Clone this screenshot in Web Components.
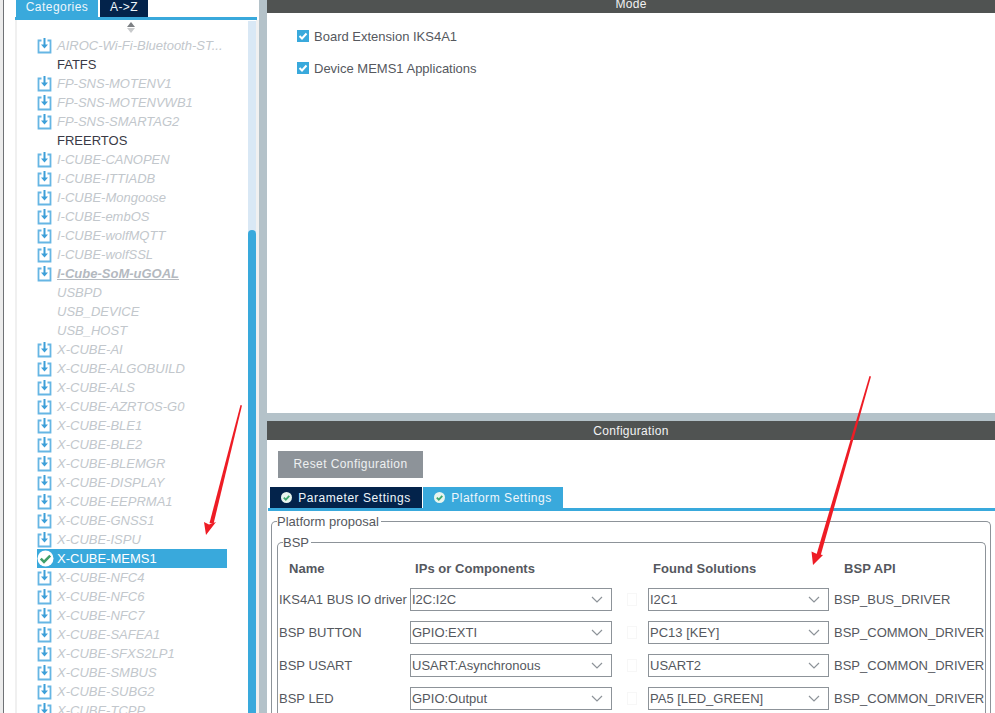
<!DOCTYPE html>
<html>
<head>
<meta charset="utf-8">
<style>
    html, body { margin: 0; height: 713px; overflow: hidden; background: #fff; }
    body { font-family: "Liberation Sans", Arial, sans-serif; font-size: 13px; color: #55585e; }
</style>
</head>
<body>
<cube-app>
    <cube-sidebar slot="left">
        <cube-item kind="pack">AIROC-Wi-Fi-Bluetooth-ST...</cube-item>
        <cube-item kind="plain" dark>FATFS</cube-item>
        <cube-item kind="pack">FP-SNS-MOTENV1</cube-item>
        <cube-item kind="pack">FP-SNS-MOTENVWB1</cube-item>
        <cube-item kind="pack">FP-SNS-SMARTAG2</cube-item>
        <cube-item kind="plain" dark>FREERTOS</cube-item>
        <cube-item kind="pack">I-CUBE-CANOPEN</cube-item>
        <cube-item kind="pack">I-CUBE-ITTIADB</cube-item>
        <cube-item kind="pack">I-CUBE-Mongoose</cube-item>
        <cube-item kind="pack">I-CUBE-embOS</cube-item>
        <cube-item kind="pack">I-CUBE-wolfMQTT</cube-item>
        <cube-item kind="pack">I-CUBE-wolfSSL</cube-item>
        <cube-item kind="pack" strong>I-Cube-SoM-uGOAL</cube-item>
        <cube-item kind="plain">USBPD</cube-item>
        <cube-item kind="plain">USB_DEVICE</cube-item>
        <cube-item kind="plain">USB_HOST</cube-item>
        <cube-item kind="pack">X-CUBE-AI</cube-item>
        <cube-item kind="pack">X-CUBE-ALGOBUILD</cube-item>
        <cube-item kind="pack">X-CUBE-ALS</cube-item>
        <cube-item kind="pack">X-CUBE-AZRTOS-G0</cube-item>
        <cube-item kind="pack">X-CUBE-BLE1</cube-item>
        <cube-item kind="pack">X-CUBE-BLE2</cube-item>
        <cube-item kind="pack">X-CUBE-BLEMGR</cube-item>
        <cube-item kind="pack">X-CUBE-DISPLAY</cube-item>
        <cube-item kind="pack">X-CUBE-EEPRMA1</cube-item>
        <cube-item kind="pack">X-CUBE-GNSS1</cube-item>
        <cube-item kind="pack">X-CUBE-ISPU</cube-item>
        <cube-item kind="done" selected>X-CUBE-MEMS1</cube-item>
        <cube-item kind="pack">X-CUBE-NFC4</cube-item>
        <cube-item kind="pack">X-CUBE-NFC6</cube-item>
        <cube-item kind="pack">X-CUBE-NFC7</cube-item>
        <cube-item kind="pack">X-CUBE-SAFEA1</cube-item>
        <cube-item kind="pack">X-CUBE-SFXS2LP1</cube-item>
        <cube-item kind="pack">X-CUBE-SMBUS</cube-item>
        <cube-item kind="pack">X-CUBE-SUBG2</cube-item>
        <cube-item kind="pack">X-CUBE-TCPP</cube-item>
    </cube-sidebar>

    <cube-mode slot="top">
        <cube-check>Board Extension IKS4A1</cube-check>
        <cube-check>Device MEMS1 Applications</cube-check>
    </cube-mode>

    <cube-config slot="bottom">
        <bsp-row label="IKS4A1 BUS IO driver" ip="I2C:I2C" found="I2C1" api="BSP_BUS_DRIVER"></bsp-row>
        <bsp-row label="BSP BUTTON" ip="GPIO:EXTI" found="PC13 [KEY]" api="BSP_COMMON_DRIVER"></bsp-row>
        <bsp-row label="BSP USART" ip="USART:Asynchronous" found="USART2" api="BSP_COMMON_DRIVER"></bsp-row>
        <bsp-row label="BSP LED" ip="GPIO:Output" found="PA5 [LED_GREEN]" api="BSP_COMMON_DRIVER"></bsp-row>
    </cube-config>

    <red-arrows slot="over"></red-arrows>
</cube-app>

<script>
// icons used by more than one element
const PACK_ICON = `<svg width="15" height="17" viewBox="0 0 15 17" fill="none">
    <path d="M4.5 3.5H1.5V15.5H13.5V3.5H10.5" stroke="#66b6e4" stroke-width="1.8"/>
    <path d="M7.5 1V9.5" stroke="#3d9fd8" stroke-width="2"/>
    <path d="M4 7.5H11L7.5 11.5Z" fill="#3d9fd8"/>
</svg>`;
const DONE_ICON = `<svg width="17" height="17" viewBox="0 0 17 17">
    <circle cx="8.5" cy="8.5" r="8" fill="#fff"/>
    <path d="M3.8 8.6L7 11.8L13.2 5.6" fill="none" stroke="#3f9f6a" stroke-width="2.6"/>
</svg>`;
const SMALL_OK = `<svg width="11" height="11" viewBox="0 0 11 11">
    <circle cx="5.5" cy="5.5" r="5.5" fill="#e8f5ee"/>
    <path d="M2.8 5.6L4.8 7.6L8.3 3.8" fill="none" stroke="#3fa86e" stroke-width="1.8"/>
</svg>`;

class CubeApp extends HTMLElement {
    constructor() {
        super();
        this.attachShadow({ mode: 'open' });
        this.shadowRoot.innerHTML = `
            <style>
                :host { display: flex; position: relative; width: 995px; height: 713px; overflow: hidden; }
                .edge { width: 3px; background: #ececec; border-right: 1px solid #6f7276; flex: none; }
                .left { width: 255px; flex: none; display: flex; min-height: 0; }
                .right { flex: 1; min-width: 0; display: flex; flex-direction: column; border-left: 8px solid #b4c2c9; }
                .split { height: 8px; background: #b4c2c9; flex: none; }
            </style>
            <div class="edge"></div>
            <div class="left"><slot name="left"></slot></div>
            <div class="right">
                <slot name="top"></slot>
                <div class="split"></div>
                <slot name="bottom"></slot>
            </div>
            <slot name="over"></slot>
        `;
    }
}

class CubeSidebar extends HTMLElement {
    constructor() {
        super();
        this.attachShadow({ mode: 'open' });
        this.shadowRoot.innerHTML = `
            <style>
                :host { display: flex; flex-direction: column; width: 255px; height: 713px; padding-left: 11px; box-sizing: border-box; background: #fff; }
                .tabs { display: flex; gap: 2px; height: 17px; padding-left: 1px; flex: none; }
                .tab { color: #eef6fb; font-size: 12px; letter-spacing: .45px; line-height: 14px; text-align: center; }
                .cat { width: 82px; background: #39a9dc; }
                .az { width: 48px; background: #03234b; }
                .line { height: 3px; background: #39a9dc; flex: none; width: 242px; }
                .body { flex: 1; display: flex; min-height: 0; width: 244px; }
                .pane { flex: none; width: 231px; border-left: 2px solid #f0f0f0; overflow: hidden; }
                .sort { height: 15px; padding-left: 110px; display: flex; flex-direction: column; gap: 1px; padding-top: 2px; box-sizing: content-box; }
                .sort i { display: block; width: 0; height: 0; border-left: 4px solid transparent; border-right: 4px solid transparent; }
                .up { border-bottom: 5px solid #7d8084; }
                .down { border-top: 5px solid #c8cacc; }
                .list { display: flex; flex-direction: column; padding: 0 0 0 20px; width: 190px; margin-top: -1px; }
                .bar { width: 8px; flex: none; margin-top: 1px; background: #d9e8f5; display: flex; flex-direction: column; padding-top: 209px; box-sizing: border-box; }
                .thumb { flex: 1; background: #39a9dc; border-radius: 4px 4px 0 0; }
                .strip { width: 3px; flex: none; background: #f0f0f0; }
            </style>
            <div class="tabs"><div class="tab cat">Categories</div><div class="tab az">A-&gt;Z</div></div>
            <div class="line"></div>
            <div class="body">
                <div class="pane">
                    <div class="sort"><i class="up"></i><i class="down"></i></div>
                    <div class="list"><slot></slot></div>
                </div>
                <div class="bar"><div class="thumb"></div></div>
                <div class="strip"></div>
            </div>
        `;
    }
}

class CubeItem extends HTMLElement {
    constructor() {
        super();
        this.attachShadow({ mode: 'open' });
    }
    connectedCallback() {
        const kind = this.getAttribute('kind');
        const icon = kind === 'pack' ? PACK_ICON : kind === 'done' ? DONE_ICON : '';
        this.shadowRoot.innerHTML = `
            <style>
                :host { display: flex; align-items: center; height: 19px; flex: none; color: #c2c7cc; font-style: italic; font-size: 13px; white-space: nowrap; }
                :host([dark]) { color: #3a3a46; font-style: normal; }
                :host([selected]) { background: #39a9dc; color: #fff; font-style: normal; }
                :host([strong]) .label { font-weight: bold; text-decoration: underline; color: #b4b9bf; }
                .ico { width: 20px; height: 19px; flex: none; display: flex; align-items: center; padding-left: 0; }
                svg { display: block; }
            </style>
            <span class="ico">${icon}</span><span class="label"><slot></slot></span>
        `;
    }
}

class CubeBar extends HTMLElement {
    constructor() {
        super();
        this.attachShadow({ mode: 'open' });
        this.shadowRoot.innerHTML = `
            <style>
                :host { display: block; flex: none; background: #505352; color: #f2f2f2; text-align: center; font-size: 12px; letter-spacing: .3px; }
            </style>
            <slot></slot>
        `;
    }
}

class CubeMode extends HTMLElement {
    constructor() {
        super();
        this.attachShadow({ mode: 'open' });
        this.shadowRoot.innerHTML = `
            <style>
                :host { display: block; height: 413px; flex: none; overflow: hidden; background: #fff; }
                cube-bar { height: 13px; line-height: 8px; }
                .checks { display: flex; flex-direction: column; gap: 16px; padding: 15px 0 0 30px; }
            </style>
            <cube-bar>Mode</cube-bar>
            <div class="checks"><slot></slot></div>
        `;
    }
}

class CubeCheck extends HTMLElement {
    constructor() {
        super();
        this.attachShadow({ mode: 'open' });
        this.shadowRoot.innerHTML = `
            <style>
                :host { display: flex; align-items: center; gap: 5px; height: 16px; font-size: 13px; color: #55585e; }
                svg { display: block; flex: none; }
            </style>
            <svg width="12" height="12" viewBox="0 0 12 12">
                <rect width="12" height="12" fill="#39a9dc"/>
                <path d="M2.5 6L5 8.5L9.5 3.5" fill="none" stroke="#fff" stroke-width="2"/>
            </svg>
            <span><slot></slot></span>
        `;
    }
}

class CubeConfig extends HTMLElement {
    constructor() {
        super();
        this.attachShadow({ mode: 'open' });
        this.shadowRoot.innerHTML = `
            <style>
                :host { display: block; flex: 1; min-height: 0; overflow: hidden; background: #fff; }
                cube-bar { height: 19px; line-height: 21px; }
                .reset { width: 145px; height: 27px; margin: 11px 0 9px 11px; background: #8d9399; color: #eef0f1; font-size: 12px; letter-spacing: .42px; line-height: 27px; text-align: center; }
                .tabs { display: flex; gap: 1px; padding-left: 3px; height: 21px; }
                .tab { display: flex; align-items: center; justify-content: center; gap: 6px; color: #eef6fb; font-size: 12px; letter-spacing: .55px; }
                .param { width: 152px; background: #03234b; }
                .plat { width: 140px; background: #39a9dc; }
                .line { height: 3px; margin-left: 1px; background: #39a9dc; }
                fieldset { margin: 0; padding: 0; border: 1px solid #8d9399; border-radius: 5px; min-width: 0; }
                legend { padding: 0 2px 0 0; font-size: 13px; line-height: 15px; color: #55585e; }
                .outer { margin: 3px 4px 0 4px; padding: 0 4px 0 5px; height: 300px; box-sizing: border-box; border-bottom: 0; }
                .outer > legend { margin-left: 0; }
                .bsp { height: 300px; padding: 0 0 0 1px; box-sizing: border-box; margin-top: 6px; border-bottom: 0; }
                .bsp > legend { margin-left: 4px; }
                .head { display: grid; grid-template-columns: 126px 238px 191px 1fr; height: 26px; padding: 5px 0 0 10px; margin-bottom: 7px; font-weight: bold; font-size: 13px; letter-spacing: .05px; line-height: 15px; align-items: center; color: #55585e; }
                .rows { display: flex; flex-direction: column; gap: 10px; }
            </style>
            <cube-bar>Configuration</cube-bar>
            <div class="reset">Reset Configuration</div>
            <div class="tabs">
                <div class="tab param">${SMALL_OK}<span>Parameter Settings</span></div>
                <div class="tab plat">${SMALL_OK}<span>Platform Settings</span></div>
            </div>
            <div class="line"></div>
            <fieldset class="outer">
                <legend>Platform proposal</legend>
                <fieldset class="bsp">
                    <legend>BSP</legend>
                    <div class="head"><span>Name</span><span>IPs or Components</span><span>Found Solutions</span><span>BSP API</span></div>
                    <div class="rows"><slot></slot></div>
                </fieldset>
            </fieldset>
        `;
    }
}

class CubeSelect extends HTMLElement {
    constructor() {
        super();
        this.attachShadow({ mode: 'open' });
        this.shadowRoot.innerHTML = `
            <style>
                :host { display: flex; align-items: center; justify-content: space-between; box-sizing: border-box; height: 23px; padding: 0 8px 0 1px; border: 1px solid #8d9399; background: #fff; font-size: 13px; color: #55585e; white-space: nowrap; }
                svg { display: block; flex: none; }
            </style>
            <span><slot></slot></span>
            <svg width="12" height="7" viewBox="0 0 12 7"><path d="M1 1L6 6L11 1" fill="none" stroke="#8d9399" stroke-width="1.2"/></svg>
        `;
    }
}

class BspRow extends HTMLElement {
    constructor() {
        super();
        this.attachShadow({ mode: 'open' });
    }
    connectedCallback() {
        const a = n => this.getAttribute(n);
        this.shadowRoot.innerHTML = `
            <style>
                :host { display: flex; align-items: center; height: 23px; font-size: 13px; color: #55585e; white-space: nowrap; }
                .name { width: 131px; flex: none; }
                .ip { width: 202px; flex: none; }
                .box { width: 8px; height: 11px; margin: 0 11px 0 15px; border: 1px solid #f7f7f7; flex: none; box-sizing: content-box; }
                .found { width: 181px; flex: none; }
                .api { margin-left: 5px; }
            </style>
            <span class="name">${a('label')}</span>
            <cube-select class="ip">${a('ip')}</cube-select>
            <span class="box"></span>
            <cube-select class="found">${a('found')}</cube-select>
            <span class="api">${a('api')}</span>
        `;
    }
}

// the two annotation arrows lie over the interface
class RedArrows extends HTMLElement {
    constructor() {
        super();
        this.attachShadow({ mode: 'open' });
        this.shadowRoot.innerHTML = `
            <style>
                :host { position: absolute; inset: 0; pointer-events: none; }
                svg { display: block; }
            </style>
            <svg width="995" height="713" viewBox="0 0 995 713" fill="#ee1c25">
                <path d="M240.5 405L242 405.5L213.5 524L209.5 523Z"/>
                <path d="M206 535L204 522L209 524.500L216 522Z"/>
                <path d="M869.5 376L871 376.500L820.500 556L816.500 554.500Z"/>
                <path d="M813 565L811.500 551.500L817 554L823 555Z"/>
            </svg>
        `;
    }
}

customElements.define('cube-app', CubeApp);
customElements.define('cube-sidebar', CubeSidebar);
customElements.define('cube-item', CubeItem);
customElements.define('cube-bar', CubeBar);
customElements.define('cube-mode', CubeMode);
customElements.define('cube-check', CubeCheck);
customElements.define('cube-config', CubeConfig);
customElements.define('cube-select', CubeSelect);
customElements.define('bsp-row', BspRow);
customElements.define('red-arrows', RedArrows);
</script>
</body>
</html>
